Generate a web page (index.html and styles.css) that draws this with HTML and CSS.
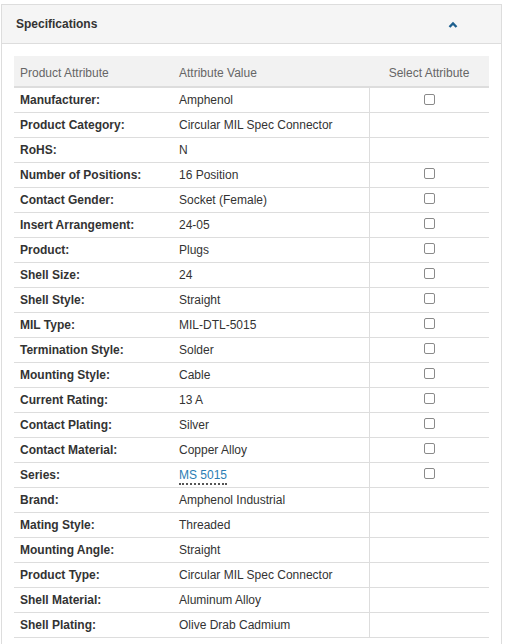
FILE: index.html
```html
<!DOCTYPE html>
<html>
<head>
<meta charset="utf-8">
<link rel="stylesheet" href="styles.css">
</head>
<body>
<div class="panel">
  <div class="panel-head">
    <span class="panel-title">Specifications</span>
    <svg class="caret" width="10" height="8" viewBox="0 0 10 8"><polyline points="1.5,6 5,2.5 8.5,6" fill="none" stroke="#1d5f8e" stroke-width="2.4"/></svg>
  </div>
  <div class="panel-body">
    <table class="specs">
      <thead>
        <tr><th class="c1">Product Attribute</th><th class="c2">Attribute Value</th><th class="c3">Select Attribute</th></tr>
      </thead>
      <tbody>
        <tr><td class="c1">Manufacturer:</td><td class="c2">Amphenol</td><td class="c3"><input type="checkbox" class="cb"></td></tr>
        <tr><td class="c1">Product Category:</td><td class="c2">Circular MIL Spec Connector</td><td class="c3"></td></tr>
        <tr><td class="c1">RoHS:</td><td class="c2">N</td><td class="c3"></td></tr>
        <tr><td class="c1">Number of Positions:</td><td class="c2">16 Position</td><td class="c3"><input type="checkbox" class="cb"></td></tr>
        <tr><td class="c1">Contact Gender:</td><td class="c2">Socket (Female)</td><td class="c3"><input type="checkbox" class="cb"></td></tr>
        <tr><td class="c1">Insert Arrangement:</td><td class="c2">24-05</td><td class="c3"><input type="checkbox" class="cb"></td></tr>
        <tr><td class="c1">Product:</td><td class="c2">Plugs</td><td class="c3"><input type="checkbox" class="cb"></td></tr>
        <tr><td class="c1">Shell Size:</td><td class="c2">24</td><td class="c3"><input type="checkbox" class="cb"></td></tr>
        <tr><td class="c1">Shell Style:</td><td class="c2">Straight</td><td class="c3"><input type="checkbox" class="cb"></td></tr>
        <tr><td class="c1">MIL Type:</td><td class="c2">MIL-DTL-5015</td><td class="c3"><input type="checkbox" class="cb"></td></tr>
        <tr><td class="c1">Termination Style:</td><td class="c2">Solder</td><td class="c3"><input type="checkbox" class="cb"></td></tr>
        <tr><td class="c1">Mounting Style:</td><td class="c2">Cable</td><td class="c3"><input type="checkbox" class="cb"></td></tr>
        <tr><td class="c1">Current Rating:</td><td class="c2">13 A</td><td class="c3"><input type="checkbox" class="cb"></td></tr>
        <tr><td class="c1">Contact Plating:</td><td class="c2">Silver</td><td class="c3"><input type="checkbox" class="cb"></td></tr>
        <tr><td class="c1">Contact Material:</td><td class="c2">Copper Alloy</td><td class="c3"><input type="checkbox" class="cb"></td></tr>
        <tr><td class="c1">Series:</td><td class="c2"><a class="link" href="#">MS 5015</a></td><td class="c3"><input type="checkbox" class="cb"></td></tr>
        <tr><td class="c1">Brand:</td><td class="c2">Amphenol Industrial</td><td class="c3"></td></tr>
        <tr><td class="c1">Mating Style:</td><td class="c2">Threaded</td><td class="c3"></td></tr>
        <tr><td class="c1">Mounting Angle:</td><td class="c2">Straight</td><td class="c3"></td></tr>
        <tr><td class="c1">Product Type:</td><td class="c2">Circular MIL Spec Connector</td><td class="c3"></td></tr>
        <tr><td class="c1">Shell Material:</td><td class="c2">Aluminum Alloy</td><td class="c3"></td></tr>
        <tr><td class="c1">Shell Plating:</td><td class="c2">Olive Drab Cadmium</td><td class="c3"></td></tr>
      </tbody>
    </table>
  </div>
</div>
</body>
</html>
```

FILE: styles.css
```css
html, body {
  margin: 0;
  padding: 0;
  background: #fff;
}
body {
  font-family: "Liberation Sans", Arial, sans-serif;
  font-size: 12px;
  color: #333;
}
.panel {
  margin: 4px 0 0 1px;
  width: 499px;
  border: 1px solid #ddd;
  border-bottom: none;
  background: #fff;
}
.panel-head {
  height: 38px;
  background: #f5f5f5;
  border-bottom: 1px solid #ddd;
  display: flex;
  align-items: center;
  justify-content: space-between;
  padding: 0 43px 0 14px;
}
.panel-title {
  font-weight: bold;
  color: #333;
}
.caret {
  display: block;
  margin-top: 1px;
}
.panel-body {
  padding: 12px 11px 20px 12px;
}
.specs {
  width: 475px;
  border-collapse: collapse;
  table-layout: fixed;
}
.specs th {
  box-sizing: border-box;
  height: 31px;
  background: #f2f2f2;
  color: #666;
  font-weight: normal;
  text-align: left;
  padding: 3px 6px 0;
  border-bottom: 2px solid #ddd;
}
.specs th.c3 {
  text-align: center;
}
.specs td {
  box-sizing: border-box;
  height: 25px;
  padding: 0 6px;
  border-bottom: 1px solid #ddd;
  vertical-align: middle;
  line-height: 14px;
}
.specs td.c1 {
  font-weight: bold;
}
.specs td.c3 {
  border-left: 1px solid #ddd;
  text-align: center;
}
.c1 { width: 159px; }
.c2 { width: 196px; }
.c3 { width: 120px; }
.cb {
  appearance: none;
  -webkit-appearance: none;
  display: inline-block;
  vertical-align: middle;
  width: 11px;
  height: 11px;
  margin: -3px 0 0 0;
  border: 1px solid #8a8a8a;
  border-radius: 2px;
  background: #fff;
  box-sizing: border-box;
}
.link {
  color: #2a7db4;
  text-decoration: none;
  border-bottom: 2px dotted #555;
  padding-bottom: 1px;
}
```
